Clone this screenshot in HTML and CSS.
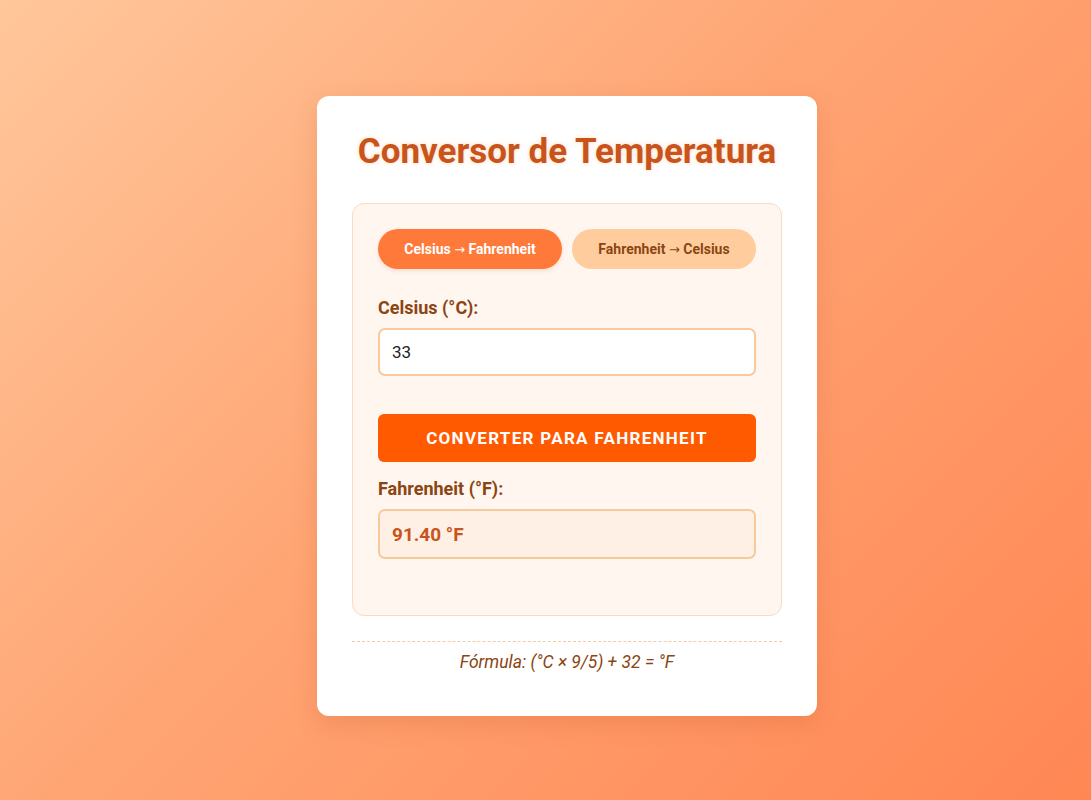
FILE: index.html
```html
<!DOCTYPE html>
<html lang="pt">
<head>
<meta charset="utf-8">
<title>Conversor de Temperatura</title>
<link rel="stylesheet" href="styles.css">
</head>
<body>
<main class="card">
  <h1 class="title">Conversor de Temperatura</h1>
  <section class="panel">
    <div class="tabs">
      <button class="tab tab-active">Celsius <span class="arrow">→</span> Fahrenheit</button>
      <button class="tab">Fahrenheit <span class="arrow">→</span> Celsius</button>
    </div>
    <label class="label" for="cin">Celsius (°C):</label>
    <input id="cin" class="input" type="text" value="33">
    <button class="convert">Converter para Fahrenheit</button>
    <div class="label">Fahrenheit (°F):</div>
    <div class="result">91.40 °F</div>
  </section>
  <p class="formula">Fórmula: (°C × 9/5) + 32 = °F</p>
</main>
</body>
</html>
```

FILE: styles.css
```css
* { box-sizing: border-box; }
html, body { height: 100%; }
body {
  margin: 0;
  font-family: Roboto, "Noto Sans", sans-serif;
  background: linear-gradient(135deg, #ffc79b 0%, #ffa574 45%, #ff8754 100%);
  display: flex;
  align-items: flex-start;
  justify-content: center;
  padding-top: 96px;
  padding-left: 43px;
}
.card {
  width: 500px;
  background: #fff;
  border-radius: 12px;
  box-shadow: 0 8px 24px rgba(180, 70, 20, 0.18);
  padding: 32px 35px 44px;
}
.title {
  margin: 0 0 27px;
  text-align: center;
  font-size: 35px;
  font-weight: 700;
  color: #c9541b;
  line-height: 48px;
  text-shadow: 0 0 4px rgba(255, 170, 110, 0.45);
}
.panel {
  background: #fff6f0;
  border: 1px solid #f6dcc3;
  border-radius: 12px;
  padding: 25px 25px 56px;
  display: flex;
  flex-direction: column;
}
.tabs {
  display: flex;
  gap: 10px;
  margin-bottom: 28px;
}
.tab {
  flex: 1;
  height: 40px;
  border: none;
  border-radius: 20px;
  background: #ffcd9d;
  color: #8b4513;
  font-family: Roboto, sans-serif;
  font-size: 14px;
  font-weight: 700;
  cursor: pointer;
  white-space: nowrap;
}
.arrow {
  font-family: "DejaVu Sans", sans-serif;
  font-weight: 400;
  font-size: 13px;
}
.tab-active {
  background: #ff7a3a;
  color: #fff;
  box-shadow: 0 2px 4px rgba(200, 80, 20, 0.15);
}
.label {
  display: block;
  color: #8b4513;
  font-size: 18px;
  font-weight: 700;
  line-height: 22px;
  margin-bottom: 9px;
}
.input {
  height: 48px;
  width: 100%;
  border: 2px solid #f7c99b;
  border-radius: 7px;
  padding: 0 12px;
  font-family: Roboto, sans-serif;
  font-size: 17px;
  color: #222;
  background: #fff;
  outline: none;
  margin-bottom: 38px;
}
.convert {
  height: 48px;
  width: 100%;
  border: none;
  border-radius: 6px;
  background: #ff5a00;
  color: #fff;
  font-family: Roboto, sans-serif;
  font-size: 17px;
  font-weight: 700;
  letter-spacing: 1.3px;
  text-transform: uppercase;
  margin-bottom: 16px;
  cursor: pointer;
}
.result {
  height: 50px;
  border: 2px solid #f7c99b;
  border-radius: 7px;
  background: #fff0e6;
  padding: 0 12px;
  display: flex;
  align-items: center;
  color: #c9541b;
  font-size: 19px;
  font-weight: 700;
}
.formula {
  margin: 25px 0 0;
  padding-top: 10px;
  border-top: 1px dashed #f3cca2;
  text-align: center;
  font-style: italic;
  color: #8b4513;
  font-size: 17.5px;
  line-height: 20px;
}
```
